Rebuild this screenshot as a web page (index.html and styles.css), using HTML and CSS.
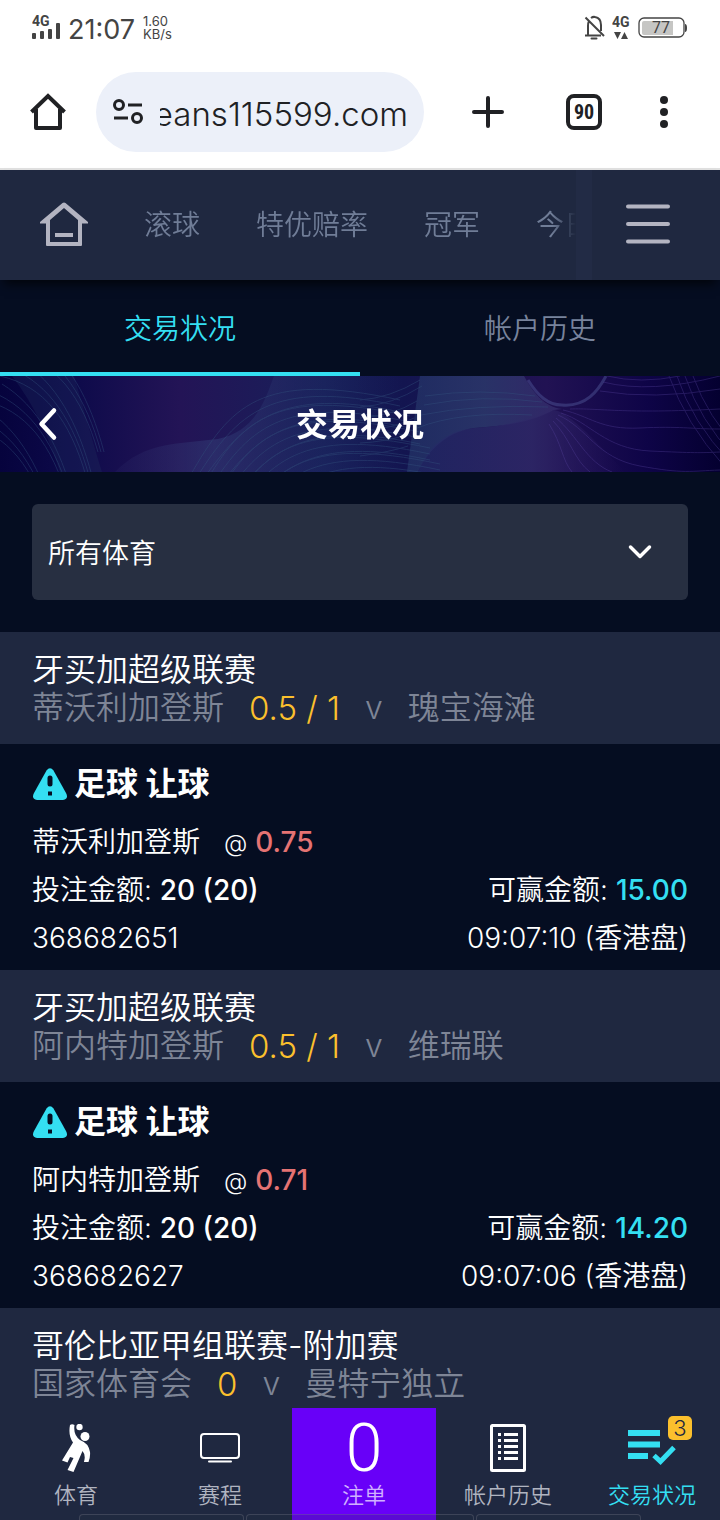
FILE: index.html
```html
<!DOCTYPE html>
<html lang="zh-CN">
<head>
<meta charset="utf-8">
<meta name="viewport" content="width=device-width, initial-scale=1">
<title>交易状况</title>
<link rel="stylesheet" href="styles.css">
</head>
<body>
<div class="app">
  <div class="status">
    <svg class="signal" width="30" height="28" viewBox="0 0 30 28" aria-hidden="true">
      <text x="0" y="12" class="net-text">4G</text>
      <g fill="#444"><rect x="0" y="19" width="4" height="6" rx="1"/><rect x="8" y="17" width="4" height="8" rx="1"/><rect x="16" y="15" width="4" height="10" rx="1"/><rect x="24" y="9" width="4" height="16" rx="1"/></g>
    </svg>
    <span class="clock">21:07</span>
    <span class="speed"><span>1.60</span><span>KB/s</span></span>
    <span class="spacer"></span>
    <svg width="22" height="26" viewBox="0 0 22 26" fill="none" stroke="#444" stroke-width="2" aria-hidden="true">
      <path d="M1 20.500h16M4 20v-9q0-3 1-5M7 3q2-1.500 4-1 6 1 6 8v6M1.500 2.500L20 21"/><path d="M7.500 23.500h5" stroke-linecap="round"/>
    </svg>
    <svg class="data" width="20" height="28" viewBox="0 0 20 28" aria-hidden="true">
      <text x="0" y="13" class="net-text">4G</text>
      <path d="M2 18h7l-3.500 7zM9 25h7l-3.500-7z" fill="#444"/>
    </svg>
    <svg width="50" height="22" viewBox="0 0 50 22" aria-hidden="true">
      <rect x="1" y="1" width="45" height="19" rx="5" fill="none" stroke="#444" stroke-width="1.300"/>
      <path d="M6 4h29v14H6q-2 0-2-2V6q0-2 2-2z" fill="#c6c6c4"/><path d="M47 7q2 0 2 4t-2 4z" fill="#444"/>
      <text x="14" y="16" class="battery-text">77</text>
    </svg>
  </div>

  <div class="toolbar">
    <button class="tool" aria-label="主页"><svg width="40" height="40" viewBox="0 0 40 40" fill="none" stroke="#202124" stroke-width="4" stroke-linejoin="round"><path d="M3.500 20L20 4l16.500 16" stroke-linejoin="miter"/><path d="M8 17v19h24V17"/></svg></button>
    <div class="address">
      <svg width="32" height="28" viewBox="0 0 32 28" fill="none" stroke="#202124" stroke-width="3" aria-hidden="true"><circle cx="7" cy="7" r="4.500"/><circle cx="25" cy="20" r="4.500"/><path d="M16 7h14M2 20h14"/></svg>
      <div class="url"><span>eans115599.com</span></div>
    </div>
    <button class="tool" aria-label="新标签页"><svg width="36" height="36" viewBox="0 0 36 36" stroke="#202124" stroke-width="4" stroke-linecap="round"><path d="M18 4v28M4 18h28"/></svg></button>
    <button class="tool" aria-label="标签页"><span class="tab-count">90</span></button>
    <button class="tool last" aria-label="更多"><svg width="12" height="36" viewBox="0 0 12 36" fill="#202124"><circle cx="6" cy="6" r="4"/><circle cx="6" cy="18" r="4"/><circle cx="6" cy="30" r="4"/></svg></button>
  </div>

  <header class="nav">
    <a class="nav-home" href="#" aria-label="首页"><svg width="48" height="48" viewBox="0 0 48 48" fill="#b3b4c1"><path fill-rule="evenodd" d="M22.500 2q1.500-1 3 0L48 21v1.500h-6V44q0 1-1 1H7q-1 0-1-1V22.500H0V21zM24 7L10 19v22h28V19z"/><path d="M15 32h18v4H15z"/></svg></a>
    <nav class="nav-links"><a href="#">滚球</a><a href="#">特优赔率</a><a href="#">冠军</a><a href="#">今日</a></nav>
    <button class="menu" aria-label="菜单"><svg width="44" height="44" viewBox="0 0 44 44" stroke="#b3b4c1" stroke-width="4" stroke-linecap="round"><path d="M2 3.500h40M2 21h40M2 38.500h40"/></svg></button>
  </header>

  <nav class="tabs"><a class="tab active" href="#">交易状况</a><a class="tab" href="#">帐户历史</a></nav>

  <div class="banner">
    <svg class="waves" viewBox="0 0 720 96" preserveAspectRatio="none" fill="none" aria-hidden="true">
      <defs>
        <linearGradient id="bg"><stop offset="0" stop-color="#06033d"/><stop offset=".1" stop-color="#0d0a4a"/><stop offset=".25" stop-color="#231456"/><stop offset=".45" stop-color="#18205a"/><stop offset=".56" stop-color="#131550"/><stop offset=".76" stop-color="#211253"/><stop offset=".9" stop-color="#0e0447"/><stop offset="1" stop-color="#040030"/></linearGradient>
        <linearGradient id="fold"><stop offset="0" stop-color="#2c2a68" stop-opacity=".2"/><stop offset=".35" stop-color="#34407a" stop-opacity=".5"/><stop offset="1" stop-color="#16245c" stop-opacity="0"/></linearGradient>
        <linearGradient id="sheet"><stop offset="0" stop-color="#263a6c" stop-opacity=".6"/><stop offset=".5" stop-color="#2c3a6c" stop-opacity=".8"/><stop offset="1" stop-color="#3c3474" stop-opacity=".6"/></linearGradient>
        <linearGradient id="lower"><stop offset="0" stop-color="#232a66" stop-opacity=".7"/><stop offset=".55" stop-color="#2f2968" stop-opacity=".8"/><stop offset="1" stop-color="#2c1a62" stop-opacity="0"/></linearGradient>
        <g id="left3"><path d="M0 0C45 10 70 45 86 100"/><path d="M10 -8C50 8 74 46 89 100"/><path d="M20 -16C56 6 78 47 92 100"/></g>
        <g id="mid3"><path d="M190 100C230 30 260 -6 400 24"/><path d="M197 101C237 38 270 2 400 30"/><path d="M204 102C244 46 280 10 400 36"/></g>
      </defs>
      <rect width="720" height="96" fill="url(#bg)"/>
      <path d="M74 0C83 30 93 67 102 96H60C48 60 35 30 12 0z" fill="#203360" opacity=".3"/>
      <path d="M115 96C145 65 180 68 218 63C256 55 265 24 274 0H400V96z" fill="url(#fold)"/>
      <path d="M420 0H524C534 18 545 31 562 33L554 34C528 48 500 50 474 52C443 56 425 80 418 96H407z" fill="url(#sheet)"/>
      <path d="M418 96C430 65 452 54 475 52C502 51 530 44 554 34C570 36 600 70 625 96z" fill="url(#lower)"/>
      <g stroke="#34547f" stroke-width="1" opacity=".4">
        <use href="#left3"/><use href="#left3" x="-18" y="24"/><use href="#left3" x="-36" y="48"/><use href="#left3" x="12" y="-24"/>
        <use href="#mid3"/><use href="#mid3" x="10" y="16"/><use href="#mid3" x="20" y="32"/><use href="#mid3" x="30" y="48"/><use href="#mid3" x="40" y="64"/>
        <path d="M360 24Q390 22 420 4M360 31Q392 29 422 10M360 42Q392 40 417 25M360 54Q390 54 414 42M360 67Q385 66 410 58M360 80Q390 76 408 70M425 20Q480 12 535 20M424 29Q482 18 542 26M421 39Q476 28 548 31M417 52Q460 35 532 39"/>
      </g>
      <g stroke="#5945a0" stroke-width="1" opacity=".35">
        <path d="M563 34C590 40 600 54 640 52S690 53 720 53M561 37C590 46 605 73 650 75S700 77 720 76M558 39C588 52 596 82 640 90S690 95 720 94M556 42C578 60 586 86 612 96M553 45C570 62 574 84 590 96M549 48C562 68 562 84 572 96M570 33C600 32 620 38 720 33"/>
        <path d="M603 6Q650 18 720 0M600 15Q653 24 720 13M607 0Q640 8 680 0M669 0Q686 48 724 90M677 0Q692 46 730 86M685 0Q700 45 734 80M693 0Q708 42 740 74"/>
      </g>
      <path d="M528 4C538 20 548 29 562 29C586 31 598 15 606 0" stroke="#454888" stroke-width="3" opacity=".6"/>
    </svg>
    <button class="back" aria-label="返回"><svg width="24" height="36" viewBox="0 0 24 36" fill="none" stroke="#fff" stroke-width="4.500" stroke-linecap="round" stroke-linejoin="round"><path d="M18 4.500L5.500 18 18 31.500"/></svg></button>
    <h1 class="title">交易状况</h1>
  </div>

  <main class="content">
    <div class="filter">
      <select class="select" aria-label="体育"><option>所有体育</option></select>
      <svg class="chevron" width="24" height="24" viewBox="0 0 24 24" fill="none" stroke="#fff" stroke-width="3.500" stroke-linecap="round" stroke-linejoin="round" aria-hidden="true"><path d="M2.500 7L12 16.500 21.500 7"/></svg>
    </div>

    <section>
      <div class="league"><h2 class="league-name">牙买加超级联赛</h2><div class="match"><span>蒂沃利加登斯</span><span class="handicap">0.5 / 1</span><span>v</span><span>瑰宝海滩</span></div></div>
      <div class="bet">
        <h3 class="bet-type"><svg width="36" height="34" viewBox="0 0 36 34" aria-hidden="true"><path d="M14.500 3.500q3.500-4.500 7 0L34 26q3 6-3 7H5q-6-1-3-7z" fill="#34dff2"/><path d="M18 11v6" stroke="#050d21" stroke-width="5" stroke-linecap="round"/><rect x="16" y="24.500" width="4" height="4" fill="#050d21"/></svg><span>足球 让球</span></h3>
        <div class="row"><span class="pick">蒂沃利加登斯</span><span><span class="at">@</span> <b class="odds">0.75</b></span></div>
        <div class="row"><span>投注金额: <b>20 (20)</b></span><span class="right">可赢金额: <b class="win">15.00</b></span></div>
        <div class="row"><span>368682651</span><span class="right">09:07:10 (香港盘)</span></div>
      </div>
    </section>

    <section>
      <div class="league"><h2 class="league-name">牙买加超级联赛</h2><div class="match"><span>阿内特加登斯</span><span class="handicap">0.5 / 1</span><span>v</span><span>维瑞联</span></div></div>
      <div class="bet">
        <h3 class="bet-type"><svg width="36" height="34" viewBox="0 0 36 34" aria-hidden="true"><path d="M14.500 3.500q3.500-4.500 7 0L34 26q3 6-3 7H5q-6-1-3-7z" fill="#34dff2"/><path d="M18 11v6" stroke="#050d21" stroke-width="5" stroke-linecap="round"/><rect x="16" y="24.500" width="4" height="4" fill="#050d21"/></svg><span>足球 让球</span></h3>
        <div class="row"><span class="pick">阿内特加登斯</span><span><span class="at">@</span> <b class="odds">0.71</b></span></div>
        <div class="row"><span>投注金额: <b>20 (20)</b></span><span class="right">可赢金额: <b class="win">14.20</b></span></div>
        <div class="row"><span>368682627</span><span class="right">09:07:06 (香港盘)</span></div>
      </div>
    </section>

    <section>
      <div class="league"><h2 class="league-name">哥伦比亚甲组联赛-附加赛</h2><div class="match"><span>国家体育会</span><span class="handicap">0</span><span>v</span><span>曼特宁独立</span></div></div>
    </section>
  </main>

  <nav class="bottom">
    <a class="item" href="#"><span class="icon"><svg width="48" height="48" viewBox="0 0 48 48" fill="#fff" aria-hidden="true"><circle cx="27.500" cy="3" r="3.200"/><circle cx="33" cy="12.500" r="4.500"/><path d="M18 1q2-1.500 4.500 0q-1.500 10 5.500 15q8.500 3 10 12q0.500 5-1.500 10h-4.500q2-7-1.500-11L21.500 48l-6-2 6-12-3.500-1-2.500 5.500-5.500-2L21 18.500q-5-7-3-17.500z"/></svg></span><span>体育</span></a>
    <a class="item" href="#"><span class="icon"><svg width="48" height="48" viewBox="0 0 48 48" fill="none" stroke="#fff" stroke-width="2" aria-hidden="true"><rect x="5" y="10" width="38" height="24" rx="3"/><path d="M13 37.500h22" stroke-linecap="round"/></svg></span><span>赛程</span></a>
    <a class="item slip" href="#"><span class="icon count">0</span><span>注单</span></a>
    <a class="item" href="#"><span class="icon"><svg width="48" height="48" viewBox="0 0 48 48" fill="none" stroke="#fff" stroke-width="3" aria-hidden="true"><rect x="7.500" y="1.500" width="33" height="45" rx="1"/><path d="M14 10.500h3M20 10.500h14M14 16.500h3M20 16.500h14M14 22.500h3M20 22.500h14M14 28.500h3M20 28.500h14M14 34.500h3M20 34.500h14"/></svg></span><span>帐户历史</span></a>
    <a class="item current" href="#"><span class="icon"><svg width="48" height="48" viewBox="0 0 48 48" fill="none" stroke="#34dff2" stroke-width="6" aria-hidden="true"><path d="M0 9h32M0 20.500h32M0 32h20"/><path d="M26 31.500l6.500 6L46 23.500" stroke-width="5"/></svg><span class="badge">3</span></span><span>交易状况</span></a>
    <div class="ghost" aria-hidden="true"><i></i><i></i><i></i></div>
  </nav>
</div>
</body>
</html>
```

FILE: styles.css
```css
* { box-sizing: border-box; }
body {
  margin: 0;
  background: #050d21;
  color: #fff;
  font-family: Inter, "Noto Sans CJK SC", sans-serif;
  font-weight: 350;
}
a { color: inherit; text-decoration: none; }
button { padding: 0; border: 0; background: none; color: inherit; font: inherit; }
svg { display: block; flex: none; }
h1, h2, h3 { margin: 0; }
.app { display: flex; flex-direction: column; height: 100vh; overflow: hidden; }
.app > * { flex: none; }

.status { display: flex; align-items: center; gap: 6px; height: 56px; padding: 0 32px; background: #fff; color: #444; }
.net-text { font: 700 14px Roboto, sans-serif; fill: #444; }
.battery-text { font: 400 16px Roboto, sans-serif; fill: #444; }
.clock { padding-top: 4px; font-size: 27px; font-weight: 400; line-height: 30px; }
.speed { display: flex; flex-direction: column; padding-left: 2px; font-size: 13px; font-weight: 400; line-height: 13px; }
.spacer { flex: 1; }

.toolbar { display: flex; align-items: center; height: 114px; padding: 0 36px 0 28px; background: #fff; border-bottom: 2px solid #e0e0e0; color: #202124; }
.tool { display: flex; justify-content: center; align-items: center; width: 40px; height: 48px; margin-left: 56px; }
.tool:first-child { margin-left: 0; }
.address + .tool { margin-left: 44px; }
.tool.last { margin-left: 40px; }
.address { flex: 1; display: flex; align-items: center; gap: 16px; height: 80px; margin-left: 28px; padding: 0 16px; border-radius: 40px; background: #ecf0f9; min-width: 0; }
.url { flex: 1; display: flex; justify-content: flex-end; overflow: hidden; padding-top: 4px; font-size: 33px; line-height: 44px; white-space: nowrap; }
.tab-count { display: flex; flex: none; align-items: center; justify-content: center; width: 36px; height: 36px; border: 4px solid #202124; border-radius: 8px; font: 700 20px "Roboto Condensed", Roboto, sans-serif; }

.nav { position: relative; display: flex; align-items: center; height: 110px; padding-left: 40px; background: #1f2840; box-shadow: 0 8px 10px -4px #000000b3; }
.nav-links { flex: 1; display: flex; gap: 56px; margin-left: 56px; overflow: hidden; white-space: nowrap; color: #707d97; font-size: 28px; line-height: 40px; mask-image: linear-gradient(to right, #000 calc(100% - 24px), transparent); }
.nav-links a { flex: none; }
.menu { display: flex; justify-content: center; align-items: center; width: 144px; height: 110px; background: linear-gradient(#222b45, #222b45) left / 16px 100% no-repeat; }

.tabs { display: flex; height: 96px; }
.tab { flex: 1; display: flex; align-items: center; justify-content: center; padding-top: 2px; border-bottom: 4px solid transparent; color: #78839c; font-size: 28px; }
.tab.active { color: #34dff2; border-color: #34dff2; }

.banner { position: relative; display: grid; grid-template-columns: 96px 1fr 96px; align-items: center; height: 96px; }
.waves { position: absolute; inset: 0; width: 100%; height: 100%; }
.back { position: relative; display: flex; justify-content: center; align-items: center; height: 96px; }
.title { position: relative; padding-bottom: 4px; text-align: center; font-size: 32px; font-weight: 700; }

.app > .content { flex: 1; min-height: 0; overflow-y: auto; scrollbar-width: none; }
.filter { position: relative; padding: 32px; }
.select { appearance: none; display: block; width: 100%; height: 96px; padding: 2px 16px 0; border: 0; border-radius: 6px; background: #272f41; color: #fff; font: inherit; font-size: 27px; }
.chevron { position: absolute; right: 36px; top: 68px; margin-right: 32px; pointer-events: none; }

.league { padding: 19px 32px 17px; background: #1f2840; font-size: 32px; line-height: 38px; }
.league-name { font-size: 32px; font-weight: 350; }
.match { display: flex; gap: 25px; color: #7e8596; }
.handicap { color: #fbc02d; font-size: 33px; }

.bet { padding: 16px 32px 8px; font-size: 28px; line-height: 48px; }
.bet-type { display: flex; align-items: center; gap: 6px; margin-bottom: 10px; font-size: 32px; font-weight: 700; }
.row { display: flex; }
.row b { font-weight: 500; }
.row .pick { margin-right: 24px; }
.row .at { font-size: 24px; line-height: 1; }
.row .right { margin-left: auto; }
.row .odds { color: #e57373; }
.row .win { color: #34dff2; }

.bottom { position: relative; display: flex; padding-left: 4px; height: 112px; background: #1f2840; color: #b0b4c0; font-size: 22px; line-height: 32px; }
.item { flex: 0 0 20vw; display: flex; flex-direction: column; align-items: center; gap: 7px; padding-top: 16px; }
.icon { position: relative; display: flex; justify-content: center; height: 48px; }
.slip { background: #6800f8; color: #d0b0ff; }
.count { align-items: center; padding-top: 2px; color: #fff; font: 300 66px/48px Roboto, sans-serif; }
.item.current { color: #34dff2; }
.badge { position: absolute; left: 40px; top: -8px; width: 24px; height: 24px; border-radius: 5px; background: #fbc02d; color: #1f2840; font-size: 22px; line-height: 24px; text-align: center; }
.ghost { position: absolute; left: 11%; right: 11%; bottom: 0; display: grid; grid-template-columns: 165fr 228fr 165fr; gap: 2px; pointer-events: none; }
.ghost i { height: 6px; border: 1px solid #8086904d; border-bottom: 0; border-radius: 4px 4px 0 0; background: #28304033; }
```
